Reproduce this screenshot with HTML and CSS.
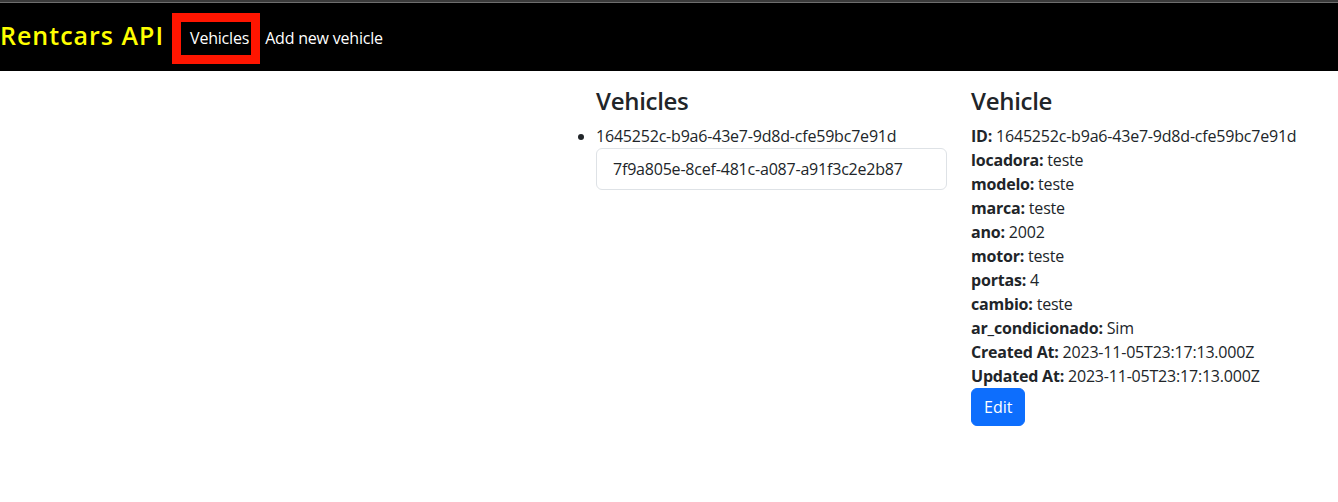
FILE: index.html
```html
<!DOCTYPE html>
<html lang="en">
<head>
<meta charset="utf-8">
<title>Rentcars API</title>
<link rel="stylesheet" href="styles.css">
</head>
<body>
<div class="chrome"></div>
<nav class="navbar">
  <a class="brand" href="#">Rentcars API</a>
  <div class="nav-links">
    <a class="nav-link active" href="#">Vehicles</a>
    <a class="nav-link" href="#">Add new vehicle</a>
  </div>
</nav>
<main class="list">
  <section class="col">
    <h4>Vehicles</h4>
    <ul class="vehicle-list">
      <li class="plain-item">1645252c-b9a6-43e7-9d8d-cfe59bc7e91d</li>
      <li class="group-item">7f9a805e-8cef-481c-a087-a91f3c2e2b87</li>
    </ul>
  </section>
  <section class="col">
    <h4>Vehicle</h4>
    <div class="field"><strong>ID:</strong> 1645252c-b9a6-43e7-9d8d-cfe59bc7e91d</div>
    <div class="field"><strong>locadora:</strong> teste</div>
    <div class="field"><strong>modelo:</strong> teste</div>
    <div class="field"><strong>marca:</strong> teste</div>
    <div class="field"><strong>ano:</strong> 2002</div>
    <div class="field"><strong>motor:</strong> teste</div>
    <div class="field"><strong>portas:</strong> 4</div>
    <div class="field"><strong>cambio:</strong> teste</div>
    <div class="field"><strong>ar_condicionado:</strong> Sim</div>
    <div class="field"><strong>Created At:</strong> 2023-11-05T23:17:13.000Z</div>
    <div class="field"><strong>Updated At:</strong> 2023-11-05T23:17:13.000Z</div>
    <a class="btn" href="#">Edit</a>
  </section>
</main>
</body>
</html>
```

FILE: styles.css
```css
* { box-sizing: border-box; }
html, body { margin: 0; padding: 0; }
body {
  font-family: "Open Sans", "Noto Sans", sans-serif;
  font-size: 16px;
  line-height: 24px;
  letter-spacing: -0.2px;
  color: #212529;
  background: #fff;
}
a { text-decoration: none; }
.chrome {
  height: 3px;
  background: #3a3a3a;
  border-bottom: 1px solid #6e6e6e;
}
.navbar {
  height: 68px;
  background: #000;
  display: flex;
  align-items: center;
}
.brand {
  color: #ffff00;
  font-size: 25px;
  font-weight: 600;
  letter-spacing: 1px;
  line-height: 30px;
  margin-right: 8px;
  margin-top: -4px;
}
.nav-links {
  display: flex;
  align-items: center;
  gap: 5px;
  margin-top: 2px;
}
.nav-link {
  color: #fff;
  line-height: 24px;
  display: block;
}
.nav-link.active {
  border: 9px solid #ff1500;
  padding: 4px 2px 5px 9px;
}
.list {
  display: flex;
  width: 750px;
  margin: 16px 4px 0 auto;
}
.col {
  width: 375px;
  padding: 0 12px;
}
h4 {
  margin: 0 0 8px;
  font-size: 24px;
  line-height: 28.8px;
  font-weight: 600;
  letter-spacing: -0.3px;
}
.vehicle-list {
  margin: 0;
  padding: 0;
}
.plain-item {
  list-style: disc outside;
}
.group-item {
  list-style: none;
  border: 1px solid #dee2e6;
  border-radius: 6px;
  padding: 8px 16px;
}
.field strong { font-weight: 700; }
.btn {
  display: inline-block;
  background: #0d6efd;
  border: 1px solid #0d6efd;
  color: #fff;
  border-radius: 6px;
  padding: 6px 12px;
  line-height: 24px;
  letter-spacing: 0;
}
```
